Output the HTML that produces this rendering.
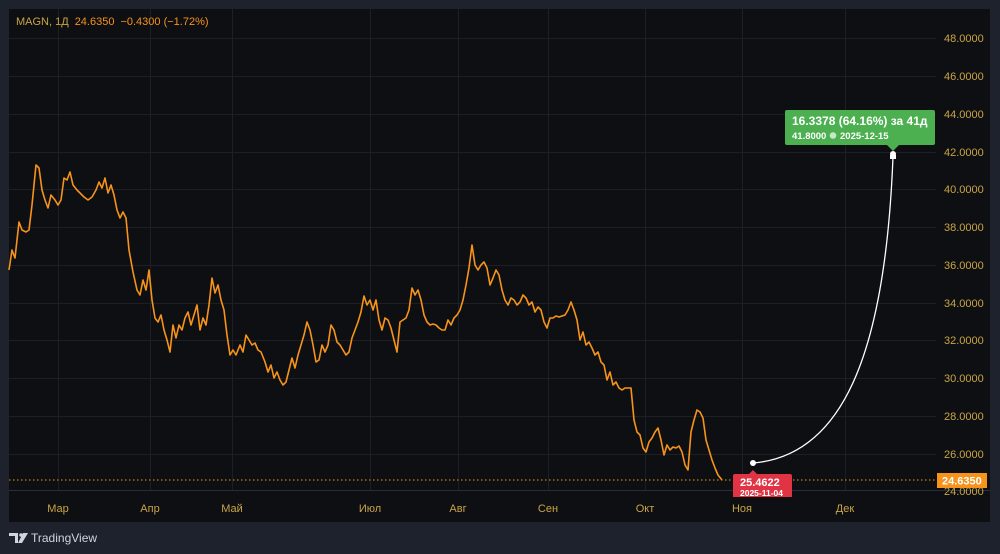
<!DOCTYPE html><html><head><meta charset="utf-8"><style>
body{margin:0;width:1000px;height:554px;background:#1e222d;overflow:hidden;font-family:"Liberation Sans",sans-serif}
</style></head><body>
<svg width="1000" height="554" style="position:absolute;left:0;top:0">
<rect x="9" y="9" width="981" height="513" fill="#0e0f12"/>
<line x1="9" y1="490.5" x2="990" y2="490.5" stroke="#2a2e39"/>
<g stroke="#1c1f26" stroke-width="1">
<line x1="9" y1="38.5" x2="936" y2="38.5"/><line x1="9" y1="76.5" x2="936" y2="76.5"/><line x1="9" y1="114.5" x2="936" y2="114.5"/><line x1="9" y1="152.5" x2="936" y2="152.5"/><line x1="9" y1="189.5" x2="936" y2="189.5"/><line x1="9" y1="227.5" x2="936" y2="227.5"/><line x1="9" y1="265.5" x2="936" y2="265.5"/><line x1="9" y1="303.5" x2="936" y2="303.5"/><line x1="9" y1="340.5" x2="936" y2="340.5"/><line x1="9" y1="378.5" x2="936" y2="378.5"/><line x1="9" y1="416.5" x2="936" y2="416.5"/><line x1="9" y1="454.5" x2="936" y2="454.5"/>
<line x1="58.5" y1="9" x2="58.5" y2="490"/><line x1="150.5" y1="9" x2="150.5" y2="490"/><line x1="232.5" y1="9" x2="232.5" y2="490"/><line x1="370.5" y1="9" x2="370.5" y2="490"/><line x1="458.5" y1="9" x2="458.5" y2="490"/><line x1="548.5" y1="9" x2="548.5" y2="490"/><line x1="645.5" y1="9" x2="645.5" y2="490"/><line x1="742.5" y1="9" x2="742.5" y2="490"/><line x1="845.5" y1="9" x2="845.5" y2="490"/>
</g>
<line x1="9" y1="480" x2="936" y2="480" stroke="#f7931a" stroke-width="1" stroke-dasharray="1.5,2.5"/>
<polyline fill="none" stroke="#f7931a" stroke-width="1.6" stroke-linejoin="round" points="9,270 12,250 15,258 19,222 22,230 26,232 29,230 32,205 36,165 39,168 42,190 45,200 48,208 51,195 55,200 58,205 61,200 64,178 67,180 70,172 73,185 77,190 80,193 84,197 88,200 92,197 96,190 99,182 102,188 105,178 108,193 111,185 114,195 117,210 120,218 123,212 126,218 129,250 133,272 137,290 140,295 143,280 146,290 149,270 152,300 155,318 158,322 161,315 164,330 167,340 170,352 173,325 176,338 179,325 182,330 185,318 188,312 191,325 194,315 197,305 200,330 203,318 206,325 209,305 212,278 215,293 218,285 221,300 224,310 227,335 230,355 233,350 236,355 240,345 243,352 246,335 249,340 252,345 255,343 258,350 261,352 265,362 268,372 271,365 274,378 277,372 280,380 283,385 286,382 289,370 292,358 295,368 298,355 301,345 304,335 307,322 310,330 313,345 316,362 319,360 322,345 325,352 328,345 331,325 334,330 337,342 340,345 343,350 346,355 349,352 352,338 355,330 358,322 361,312 364,296 367,305 370,300 373,310 376,300 379,320 382,330 385,318 388,320 391,328 394,340 397,352 400,322 403,320 406,318 409,310 412,288 415,295 418,290 421,300 424,315 427,322 430,325 433,324 436,325 439,328 442,330 445,330 448,320 451,325 454,318 457,315 460,310 463,300 466,285 469,268 472,245 475,265 478,270 481,265 484,262 487,268 490,285 493,278 496,270 499,275 502,290 505,300 508,305 511,298 514,300 517,305 520,302 523,295 526,298 529,305 532,302 535,312 538,307 541,310 544,322 547,328 550,318 553,318 556,316 559,317 562,316 565,315 568,310 571,302 574,310 577,320 580,340 583,332 586,345 589,342 592,348 595,355 598,352 601,362 604,365 607,380 610,372 613,385 616,382 619,388 622,390 625,388 628,388 631,388 634,420 637,432 640,435 643,448 646,452 649,442 652,438 655,432 658,428 661,440 664,455 667,445 670,450 673,447 676,448 679,446 682,452 685,465 688,470 691,432 694,420 697,410 700,412 703,418 706,440 709,450 712,460 715,468 718,475 722,480"/>
<path d="M753,463 C840,456 885,360 893,157" fill="none" stroke="#ffffff" stroke-width="1.3"/>
<circle cx="753" cy="463" r="3" fill="#fff"/>
<circle cx="893" cy="154" r="3" fill="#fff"/><rect x="890" y="155" width="6" height="4" fill="#fff"/>
<path d="M735,474 L749,474 L753,470 L757,474 L790,474 Q792,474 792,476 L792,497 L733,497 L733,476 Q733,474 735,474Z" fill="#e03444"/>
<text x="740" y="486" fill="#fff" font-size="11" font-weight="bold">25.4622</text>
<text x="740" y="496" fill="#fff" font-size="8.5" font-weight="bold">2025-11-04</text>
<path d="M787,110 L933,110 Q935,110 935,112 L935,143 Q935,145 933,145 L899,145 L893,151 L887,145 L787,145 Q785,145 785,143 L785,112 Q785,110 787,110Z" fill="#4caf50"/>
<text x="792" y="125" fill="#fff" font-size="12" font-weight="bold">16.3378 (64.16%) за 41д</text>
<text x="792" y="139" fill="#fff" font-size="9.5" font-weight="bold">41.8000</text>
<circle cx="833" cy="135.5" r="3.3" fill="#c8e6c9"/>
<text x="840" y="139" fill="#fff" font-size="9.5" font-weight="bold">2025-12-15</text>
<g fill="#c9a545" font-size="11">
<text x="944" y="42">48.0000</text><text x="944" y="80">46.0000</text><text x="944" y="118">44.0000</text><text x="944" y="156">42.0000</text><text x="944" y="193">40.0000</text><text x="944" y="231">38.0000</text><text x="944" y="269">36.0000</text><text x="944" y="307">34.0000</text><text x="944" y="344">32.0000</text><text x="944" y="382">30.0000</text><text x="944" y="420">28.0000</text><text x="944" y="458">26.0000</text><text x="944" y="495">24.0000</text>
</g>
<rect x="937" y="473" width="50" height="15" fill="#f7931a"/>
<text x="942" y="484.5" fill="#fff" font-size="11" font-weight="bold">24.6350</text>
<g fill="#c9a545" font-size="11" text-anchor="middle">
<text x="58" y="512">Мар</text><text x="150" y="512">Апр</text><text x="232" y="512">Май</text><text x="370" y="512">Июл</text><text x="458" y="512">Авг</text><text x="548" y="512">Сен</text><text x="645" y="512">Окт</text><text x="742" y="512">Ноя</text><text x="845" y="512">Дек</text>
</g>
<text x="16" y="25" font-size="11"><tspan fill="#c9a545">MAGN, 1Д</tspan><tspan fill="#f7931a" dx="6">24.6350</tspan><tspan fill="#f7931a" dx="6">−0.4300 (−1.72%)</tspan></text>
<g fill="#d1d4dc"><path d="M9,533 H18 V543 H15 V536 H9Z"/><circle cx="21" cy="535" r="1.8"/><path d="M23,533 H28 L22,543 H18Z"/></g>
<text x="31" y="542" fill="#d1d4dc" font-size="12">TradingView</text>
</svg>
</body></html>
